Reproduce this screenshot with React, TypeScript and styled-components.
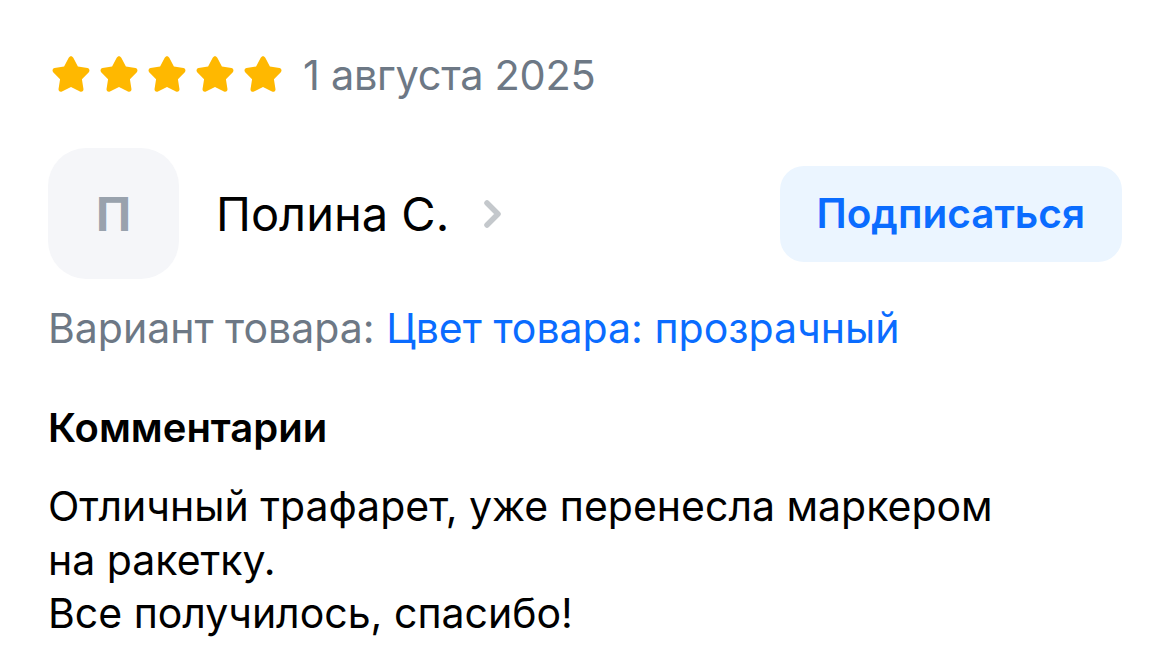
import styled, { createGlobalStyle } from "styled-components";

const GlobalStyle = createGlobalStyle`
	html, body {
		margin: 0;
		padding: 0;
		background: #fff;
	}
	body {
		font-family: Inter, "Noto Sans", sans-serif;
		color: #000;
	}
`;

function Star() {
	return (
		<svg width="46" height="46" viewBox="0 0 24 24">
			<path
				d="M12 2.2c.5 0 .9.3 1.2.8l2.4 4.6 5 .8c1 .2 1.4 1.4.7 2.1l-3.6 3.7.8 5.1c.2 1-.9 1.8-1.8 1.3L12 18.3l-4.7 2.3c-.9.5-2-.3-1.8-1.3l.8-5.1-3.6-3.7c-.7-.7-.3-1.9.7-2.1l5-.8L10.8 3c.3-.5.7-.8 1.2-.8z"
				fill="#ffb800"
			/>
		</svg>
	);
}

function Chevron() {
	return (
		<svg width="24" height="34" viewBox="0 0 24 34">
			<path d="M6 6l11 11L6 28" fill="none" stroke="#c4c8cc" strokeWidth="5.5" strokeLinecap="round" strokeLinejoin="round" />
		</svg>
	);
}

function App() {
	return (
		<>
			<GlobalStyle />
			<Review>
				<RatingRow>
					<Stars>
						{[0, 1, 2, 3, 4].map((i) => (
							<Star key={i} />
						))}
					</Stars>
					<DateText>1 августа 2025</DateText>
				</RatingRow>
				<AuthorRow>
					<Author>
						<Avatar>П</Avatar>
						<Name>Полина С.</Name>
						<Chevron />
					</Author>
					<SubscribeButton>Подписаться</SubscribeButton>
				</AuthorRow>
				<Variant>
					Вариант товара: <VariantLink>Цвет товара: прозрачный</VariantLink>
				</Variant>
				<SectionTitle>Комментарии</SectionTitle>
				<Comment>
					Отличный трафарет, уже перенесла маркером
					<br />
					на ракетку.
					<br />
					Все получилось, спасибо!
				</Comment>
			</Review>
		</>
	);
}

const Review = styled.div`
	width: 1170px;
	height: 671px;
	box-sizing: border-box;
	padding: 52px 48px 0 48px;
	display: flex;
	flex-direction: column;
	overflow: hidden;
`;

const RatingRow = styled.div`
	display: flex;
	align-items: center;
	gap: 17px;
	height: 46px;
`;

const Stars = styled.div`
	display: flex;
	gap: 2px;
`;

const DateText = styled.span`
	font-size: 41.5px;
	color: #6d7885;
	letter-spacing: -0.3px;
`;

const AuthorRow = styled.div`
	display: flex;
	align-items: center;
	justify-content: space-between;
	margin-top: 50px;
`;

const Author = styled.div`
	display: flex;
	align-items: center;
`;

const Avatar = styled.div`
	width: 131px;
	height: 131px;
	border-radius: 38px;
	background: #f5f6f9;
	color: #99a2ad;
	font-size: 47px;
	font-weight: 700;
	display: flex;
	align-items: center;
	justify-content: center;
	margin-right: 37px;
`;

const Name = styled.span`
	font-size: 47px;
	margin-right: 32px;
`;

const SubscribeButton = styled.button`
	height: 96px;
	padding: 0 37px;
	border: none;
	border-radius: 24px;
	background: #ebf5ff;
	color: #0a6cff;
	font-family: Inter, "Noto Sans", sans-serif;
	font-size: 40.5px;
	font-weight: 600;
`;

const Variant = styled.div`
	margin-top: 24px;
	font-size: 41px;
	color: #6d7885;
`;

const VariantLink = styled.span`
	color: #0a6cff;
`;

const SectionTitle = styled.div`
	margin-top: 50px;
	font-size: 40px;
	font-weight: 600;
`;

const Comment = styled.div`
	margin-top: 28px;
	font-size: 41px;
	line-height: 53.5px;
`;

export default App;
